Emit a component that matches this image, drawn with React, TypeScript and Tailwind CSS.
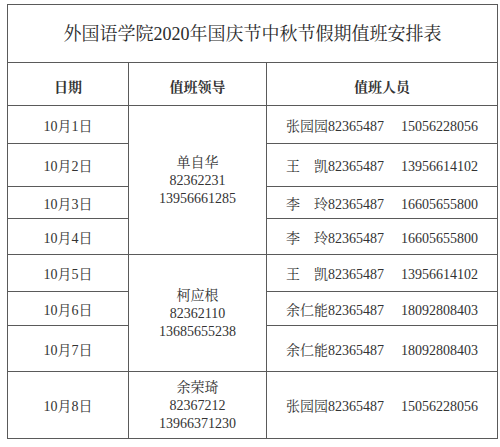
import React from "react";

const font = { fontFamily: '"Liberation Serif", "Noto Serif CJK SC", "Noto Sans CJK SC", serif' };

type Row = { date: string; h: number; person: string; phone: string };

const rows: Row[] = [
  { date: "10月1日", h: 38, person: "张园园82365487", phone: "15056228056" },
  { date: "10月2日", h: 43, person: "王\u3000凯82365487", phone: "13956614102" },
  { date: "10月3日", h: 32, person: "李\u3000玲82365487", phone: "16605655800" },
  { date: "10月4日", h: 36, person: "李\u3000玲82365487", phone: "16605655800" },
  { date: "10月5日", h: 37, person: "王\u3000凯82365487", phone: "13956614102" },
  { date: "10月6日", h: 34, person: "余仁能82365487", phone: "18092808403" },
  { date: "10月7日", h: 46, person: "余仁能82365487", phone: "18092808403" },
  { date: "10月8日", h: 67, person: "张园园82365487", phone: "15056228056" },
];

const leaders: Record<number, { span: number; lines: string[] }> = {
  0: { span: 4, lines: ["单自华", "82362231", "13956661285"] },
  4: { span: 3, lines: ["柯应根", "82362110", "13685655238"] },
  7: { span: 1, lines: ["余荣琦", "82367212", "13966371230"] },
};

const td = "border border-[#5a5a5a] text-center align-middle p-0";

export default function App() {
  return (
    <div className="w-[500px] h-[447px] bg-white text-[#333333]" style={font}>
      <div className="pt-[4px] pl-[7px]">
        <table className="table-fixed border-collapse w-[490px]">
          <colgroup>
            <col style={{ width: 121 }} />
            <col style={{ width: 138 }} />
            <col style={{ width: 231 }} />
          </colgroup>
          <tbody>
            <tr className="h-[58px]">
              <td colSpan={3} className={`${td} text-[18px] leading-none text-[#2a2a2a]`}>
                外国语学院2020年国庆节中秋节假期值班安排表
              </td>
            </tr>
            <tr className="h-[43px]">
              <td className={`${td} text-[14px] font-bold pt-[6px]`}>日期</td>
              <td className={`${td} text-[14px] font-bold pt-[6px]`}>值班领导</td>
              <td className={`${td} text-[14px] font-bold pt-[6px]`}>值班人员</td>
            </tr>
            {rows.map((r, i) => (
              <tr key={i} style={{ height: r.h }}>
                <td className={`${td} text-[14px] pt-[3px]`}>{r.date}</td>
                {leaders[i] && (
                  <td rowSpan={leaders[i].span} className={`${td} text-[14px] leading-[18px] pt-[2px]`}>
                    {leaders[i].lines.map((l, k) => (
                      <div key={k}>{l}</div>
                    ))}
                  </td>
                )}
                <td className={`${td} text-[14px] pt-[3px]`}>
                  <span>{r.person}</span>
                  <span className="ml-[17px]">{r.phone}</span>
                </td>
              </tr>
            ))}
          </tbody>
        </table>
      </div>
    </div>
  );
}
